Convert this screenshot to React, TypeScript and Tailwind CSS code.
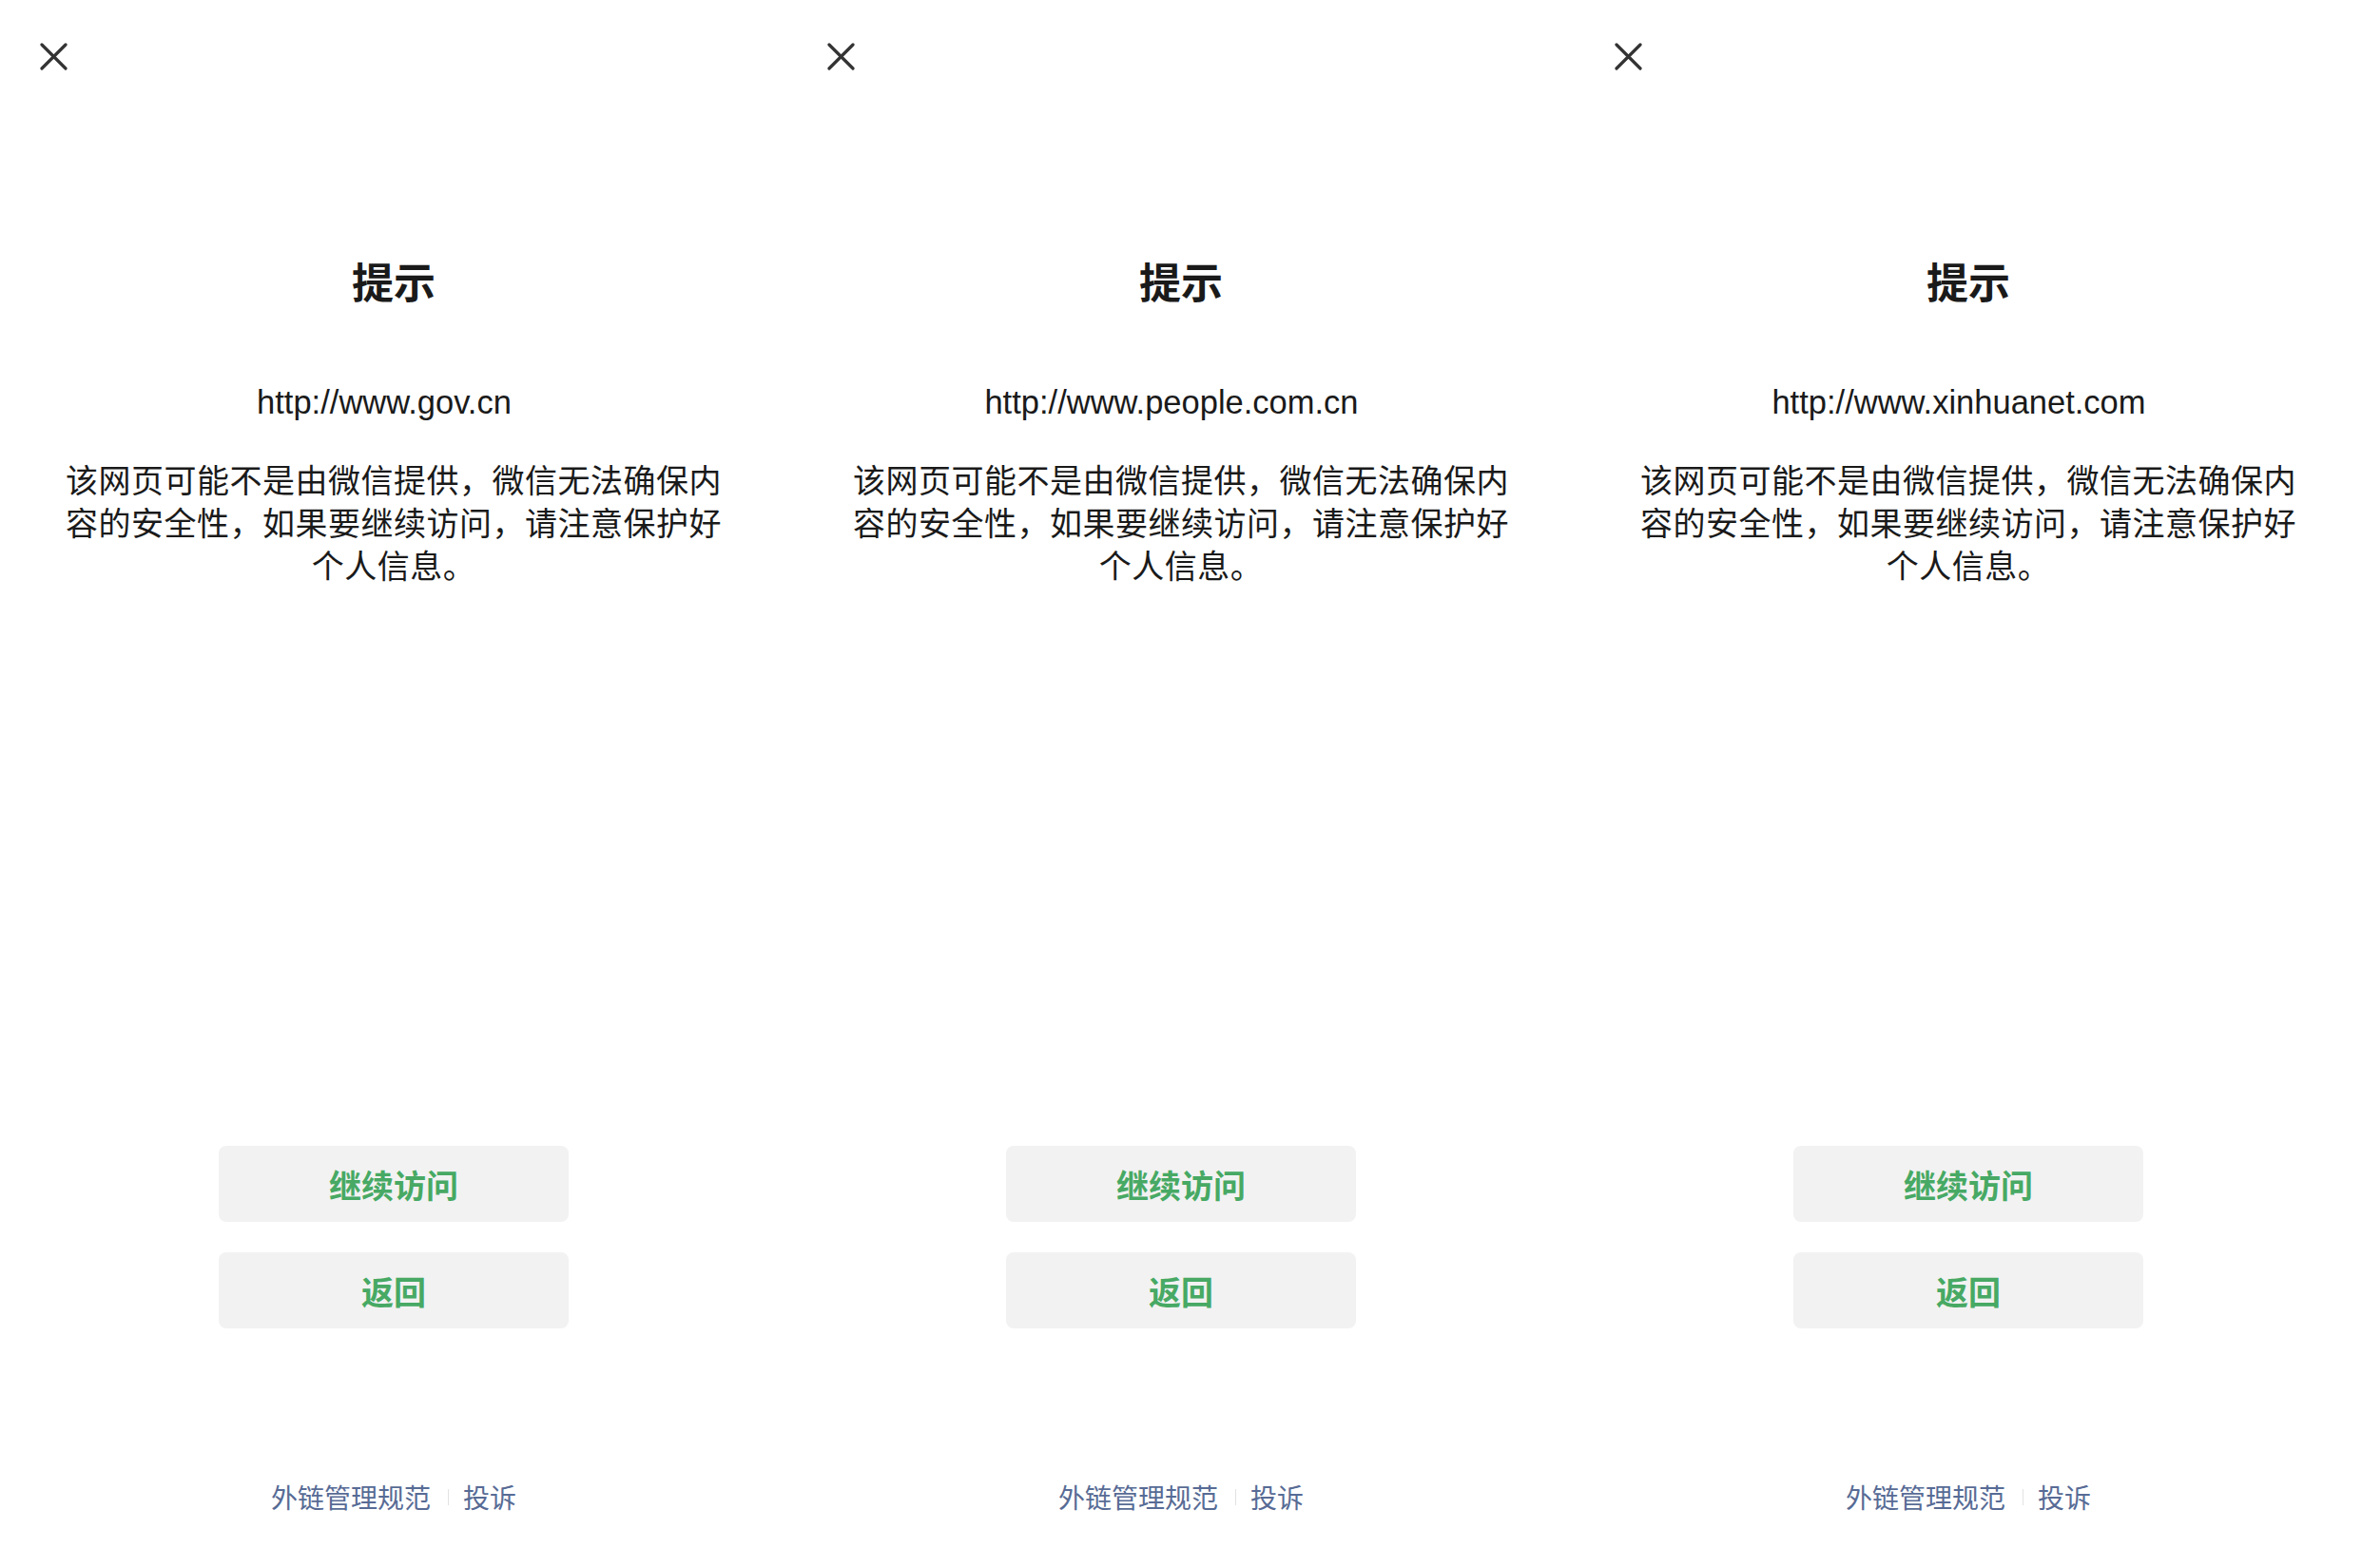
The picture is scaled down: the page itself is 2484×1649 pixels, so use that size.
const sites = ["http://www.gov.cn", "http://www.people.com.cn", "http://www.xinhuanet.com"];

const cjk = '"Noto Sans CJK SC", "Noto Sans", sans-serif';

function CloseIcon() {
  return (
    <svg width="29" height="29" viewBox="0 0 29 29" fill="none" aria-hidden="true">
      <path d="M2 2L27 27M27 2L2 27" stroke="#333333" strokeWidth="3.2" strokeLinecap="round" />
    </svg>
  );
}

function WarnPanel({ url }: { url: string }) {
  return (
    <div
      className="flex h-[1649px] w-[828px] flex-col items-center bg-white"
      style={{ fontFamily: cjk }}
    >
      <div className="self-start pl-[42px] pt-[45px]">
        <CloseIcon />
      </div>

      <h1 className="mt-[191px] text-[44px] font-bold leading-[60px] text-[#1a1a1a]">提示</h1>

      <p className="mt-[76px] pr-5 font-['Liberation_Sans',sans-serif] text-[34.5px] leading-[44px] text-[#1a1a1a]">
        {url}
      </p>

      <p className="mt-[36px] w-[700px] text-center text-[34px] leading-[45px] tracking-[0.5px] text-[#1a1a1a]">
        该网页可能不是由微信提供，微信无法确保内容的安全性，如果要继续访问，请注意保护好个人信息。
      </p>

      <div className="mt-[589px] flex flex-col gap-[32px]">
        <button
          type="button"
          className="flex h-[80px] w-[368px] items-center justify-center rounded-[8px] bg-[#f2f2f2] text-[34px] font-semibold text-[#47a964]"
        >
          继续访问
        </button>
        <button
          type="button"
          className="flex h-[80px] w-[368px] items-center justify-center rounded-[8px] bg-[#f2f2f2] text-[34px] font-semibold text-[#47a964]"
        >
          返回
        </button>
      </div>

      <div className="mt-[157px] flex items-center text-[28px] leading-[40px] text-[#576b95]">
        <span>外链管理规范</span>
        <span className="ml-[18px] mr-[15px] h-[17px] w-px bg-[#e2e2e2]" />
        <span>投诉</span>
      </div>
    </div>
  );
}

export default function App() {
  return (
    <div className="flex h-[1649px] w-[2484px] overflow-hidden bg-white">
      {sites.map((u) => (
        <WarnPanel key={u} url={u} />
      ))}
    </div>
  );
}
